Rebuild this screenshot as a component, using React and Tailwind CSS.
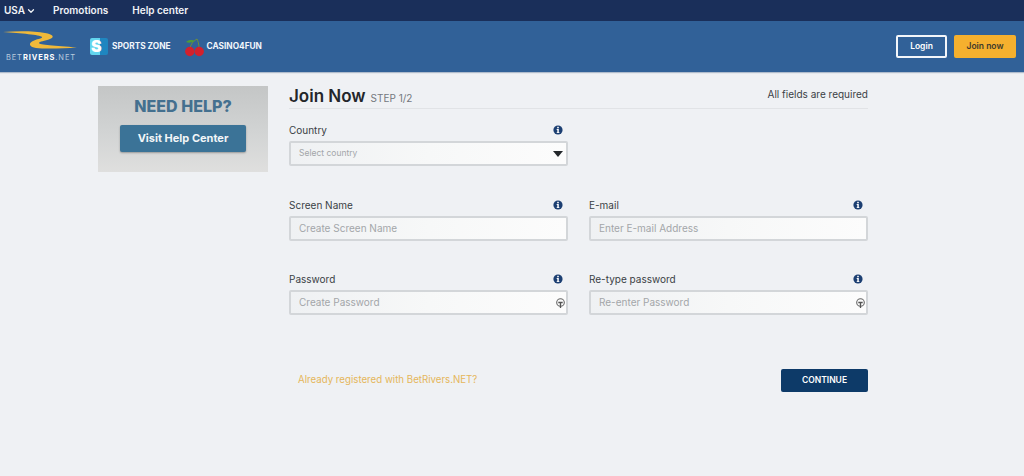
import React from 'react';
import { ChevronDown } from 'lucide-react';

const font = "font-['Inter','Liberation_Sans',sans-serif]";

const InfoIcon = () => (
  <svg width="10" height="10" viewBox="0 0 10 10" className="shrink-0">
    <circle cx="5" cy="5" r="4.6" fill="#1c3f72" />
    <rect x="4.2" y="1.8" width="1.6" height="1.5" fill="#fff" />
    <path d="M3.7 4.1H5.8V7.2H6.4V8H3.7V7.2H4.3V4.9H3.7Z" fill="#fff" />
  </svg>
);

const EyeIcon = () => (
  <svg width="11" height="11" viewBox="0 0 11 11" className="absolute right-[0px] top-1/2 -translate-y-1/2">
    <circle cx="5.5" cy="5" r="3.8" fill="none" stroke="#666" strokeWidth="1.1" />
    <path d="M3.3 5H7.7M5.5 5V10.5" stroke="#555" strokeWidth="1.3" fill="none" />
  </svg>
);

const Logo = () => (
  <div className="flex w-[76px] flex-col items-center">
    <svg width="76" height="22" viewBox="0 1 76 22">
      <path
        d="M0 2C15 1 32 1 42 3C50 4.5 52 7 47 9C42 11 36 11.5 36 13C36 15 52 15.5 74 17.5C60 18.5 42 19 33 18C27 17 25 14 29 11.5C33 9 40 8.5 39 7C37 4.5 18 3.5 0 2Z"
        fill="#f0b93a"
      />
    </svg>
    <div className="mt-[1px] text-[7.5px] leading-[8px] tracking-[0.9px] whitespace-nowrap text-[#b9cadd]">
      BET<span className="font-bold text-white">RIVERS</span>.NET
    </div>
  </div>
);

const SportsLogo = () => (
  <div className="flex h-[17px] w-[18px] items-center rounded-[2px] bg-[linear-gradient(90deg,#62d5ee_0%,#62d5ee_58%,#1f86c0_58%,#1f86c0_100%)] pl-[1px] text-[16px] leading-[17px] font-black text-white">
    S
  </div>
);

const Cherries = () => (
  <svg width="19" height="20" viewBox="0 0 19 20">
    <path d="M5 11C6 7 8 4 12 2M14 11C14 7 13 4 12 2" stroke="#6f8f3a" strokeWidth="1" fill="none" />
    <path d="M1 5C4 2 8 3 10 4C7 6 3 6 1 5Z" fill="#4f9a3a" />
    <circle cx="4.8" cy="14.5" r="4.7" fill="#d3202c" />
    <circle cx="14.2" cy="14.5" r="4.7" fill="#d3202c" />
  </svg>
);

const Field = ({ label, placeholder, select, eye }) => (
  <div className="w-[279px]">
    <div className="flex items-center justify-between pr-[5px]">
      <span className="text-[10px] leading-[14px] text-[#3a3f45]">{label}</span>
      <InfoIcon />
    </div>
    <div className="relative mt-[4px] flex h-[25px] items-center rounded-[2px] border-2 border-[#d3d6d9] bg-[linear-gradient(90deg,#eff1f3_0%,#f7f8f8_50%,#fcfcfc_100%)] pl-[8px]">
      <span className={`${select ? 'text-[8.5px]' : 'text-[10px]'} text-[#a3a6a9]`}>{placeholder}</span>
      {select && (
        <div className="absolute top-[8px] right-[3px] h-0 w-0 border-x-[5.5px] border-t-[6px] border-x-transparent border-t-[#23272b]" />
      )}
      {eye && <EyeIcon />}
    </div>
  </div>
);

export default function App() {
  return (
    <div className={`${font} flex h-[476px] w-[1024px] flex-col overflow-hidden bg-[#eff1f4]`}>
      <nav className="flex h-[21px] items-center bg-[#1a2f5a] pl-[4px] text-[10px] font-semibold text-[#f1f3f7]">
        <span className="flex items-center">
          USA
          <ChevronDown size={10} strokeWidth={3} className="ml-[1px]" />
        </span>
        <span className="ml-[17px]">Promotions</span>
        <span className="ml-[24px]">Help center</span>
      </nav>

      <header className="flex h-[51px] items-center justify-between bg-[#316198] pr-[8px] pl-[3px] shadow-[0_1px_1px_rgba(60,90,130,0.35)]">
        <div className="flex items-center">
          <Logo />
          <div className="ml-[11px] flex items-center gap-[2px]">
            <SportsLogo />
            <span className="ml-[2px] text-[8.3px] font-bold text-[#f2f6fb]">SPORTS ZONE</span>
          </div>
          <div className="ml-[14px] flex items-center gap-[3px]">
            <Cherries />
            <span className="text-[8.3px] font-bold text-[#f2f6fb]">CASINO4FUN</span>
          </div>
        </div>
        <div className="flex items-center gap-[7px]">
          <button className="h-[23px] w-[51px] rounded-[2px] border-2 border-[#f3f6fa] text-[8.5px] font-semibold text-white">
            Login
          </button>
          <button className="h-[23px] w-[62px] rounded-[2px] bg-[#f5b02e] text-[8.5px] font-semibold text-[#3e3a2c]">
            Join now
          </button>
        </div>
      </header>

      <main className="flex pt-[14px] pl-[98px]">
        <div className="flex h-[86px] w-[170px] flex-col items-center bg-[linear-gradient(180deg,#c4c6c6_0%,#d2d4d4_55%,#dfdfde_100%)]">
          <div className="mt-[11px] text-[16px] leading-[19px] font-extrabold text-[#44708f]">NEED HELP?</div>
          <div className="mt-[9px] flex h-[27px] w-[126px] items-center justify-center rounded-[2px] bg-[#3b7397] text-[11px] font-bold text-[#f2f6f8] shadow-[0_1px_2px_rgba(0,0,0,0.3)]">
            Visit Help Center
          </div>
        </div>

        <section className="ml-[21px] w-[579px]">
          <div className="flex h-[23px] items-start justify-between border-b border-[#e1e3e6]">
            <div className="flex items-baseline">
              <h1 className="text-[17px] leading-[21px] font-semibold text-[#23262a]">Join Now</h1>
              <span className="ml-[5px] text-[10px] text-[#74787d]">STEP 1/2</span>
            </div>
            <span className="mt-[1px] text-[10px] leading-[14px] text-[#3a3f45]">All fields are required</span>
          </div>

          <div className="mt-[14px]">
            <Field label="Country" placeholder="Select country" select />
          </div>
          <div className="mt-[32px] flex gap-[21px]">
            <Field label="Screen Name" placeholder="Create Screen Name" />
            <Field label="E-mail" placeholder="Enter E-mail Address" />
          </div>
          <div className="mt-[31px] flex gap-[21px]">
            <Field label="Password" placeholder="Create Password" eye />
            <Field label="Re-type password" placeholder="Re-enter Password" eye />
          </div>

          <div className="mt-[54px] flex items-center justify-between pl-[9px]">
            <span className="text-[9.7px] text-[#e5b65a]">Already registered with BetRivers.NET?</span>
            <button className="h-[23px] w-[87px] rounded-[2px] bg-[#0d3a68] text-[8.5px] font-semibold text-white">
              CONTINUE
            </button>
          </div>
        </section>
      </main>
    </div>
  );
}
